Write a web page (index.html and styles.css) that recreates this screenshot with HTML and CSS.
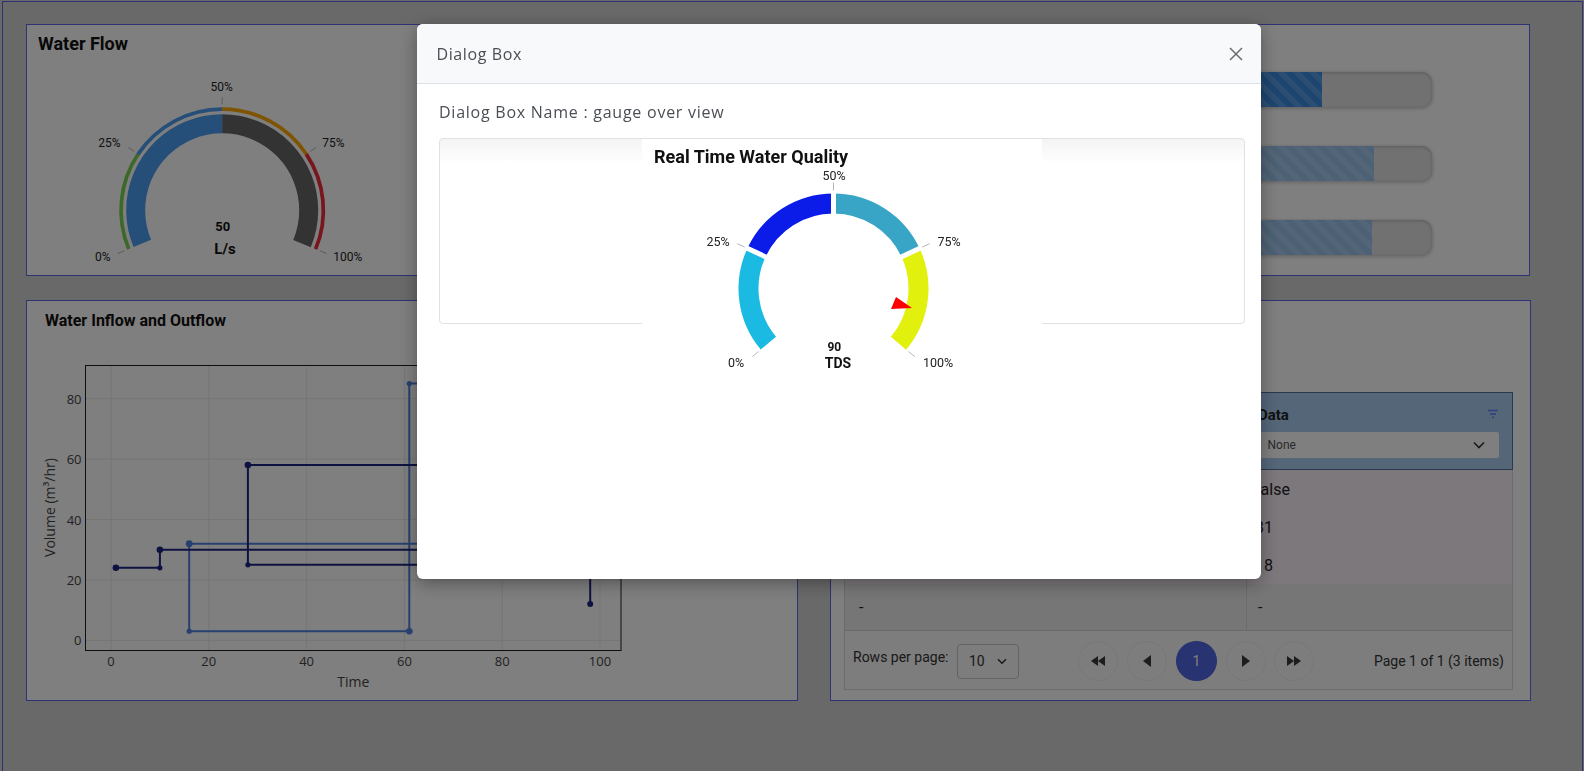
FILE: index.html
```html
<!DOCTYPE html>
<html lang="en">
<head>
<meta charset="utf-8">
<title>Dashboard</title>
<link rel="stylesheet" href="styles.css">
</head>
<body>
<div class="frame">
  <div class="row row-top">
    <section class="card card-flow">
      <h2 class="card-title t-flow">Water Flow</h2>
      <svg class="svg-block" width="872" height="221" viewBox="27 54 872 221">
        <circle cx="222.2" cy="210.3" r="86.5" fill="none" stroke="#4b9ef2" stroke-width="19" stroke-dasharray="169.84 1000" transform="rotate(157.5 222.2 210.3)"/>
        <circle cx="222.2" cy="210.3" r="86.5" fill="none" stroke="#666666" stroke-width="19" stroke-dasharray="169.84 1000" transform="rotate(270 222.2 210.3)"/>
        <circle cx="222.2" cy="210.3" r="101.15" fill="none" stroke="#78d052" stroke-width="3.7" stroke-dasharray="99.3 1000" transform="rotate(157.5 222.2 210.3)"/>
        <circle cx="222.2" cy="210.3" r="101.15" fill="none" stroke="#4b9ef2" stroke-width="3.7" stroke-dasharray="99.3 1000" transform="rotate(213.75 222.2 210.3)"/>
        <circle cx="222.2" cy="210.3" r="101.15" fill="none" stroke="#ffa800" stroke-width="3.7" stroke-dasharray="99.3 1000" transform="rotate(270 222.2 210.3)"/>
        <circle cx="222.2" cy="210.3" r="101.15" fill="none" stroke="#f02a3a" stroke-width="3.7" stroke-dasharray="99.3 1000" transform="rotate(326.25 222.2 210.3)"/>
        <g class="tick">
          <line x1="124.27" y1="250.86" x2="117.8" y2="253.54"/>
          <line x1="134.06" y1="151.41" x2="128.24" y2="147.52"/>
          <line x1="222.2" y1="104.3" x2="222.2" y2="97.3"/>
          <line x1="310.34" y1="151.41" x2="316.16" y2="147.52"/>
          <line x1="320.13" y1="250.86" x2="326.6" y2="253.54"/>
        </g>
        <g class="g-label">
          <text x="102.7" y="256.7">0%</text>
          <text x="109.3" y="142.7">25%</text>
          <text x="221.7" y="87.3">50%</text>
          <text x="333.3" y="142.7">75%</text>
          <text x="347.7" y="256.7">100%</text>
        </g>
        <text class="g-value" x="222.7" y="226.7">50</text>
        <text class="g-unit" x="225" y="249.3">L/s</text>
      </svg>
    </section>
    <section class="card card-bars">
      <div class="bar"><div class="fill fill-a" style="width:382px"></div></div>
      <div class="bar"><div class="fill fill-b" style="width:434px"></div></div>
      <div class="bar"><div class="fill fill-b" style="width:432px"></div></div>
    </section>
  </div>

  <div class="row row-bottom">
    <section class="card card-chart">
      <h2 class="card-title t-chart">Water Inflow and Outflow</h2>
      <svg class="svg-block" width="770" height="370" viewBox="27 331 770 370">
        <g class="grid-line">
          <line x1="111" y1="365.5" x2="111" y2="650.5"/>
          <line x1="208.8" y1="365.5" x2="208.8" y2="650.5"/>
          <line x1="306.6" y1="365.5" x2="306.6" y2="650.5"/>
          <line x1="404.4" y1="365.5" x2="404.4" y2="650.5"/>
          <line x1="502.2" y1="365.5" x2="502.2" y2="650.5"/>
          <line x1="600" y1="365.5" x2="600" y2="650.5"/>
          <line x1="85.5" y1="640.3" x2="621" y2="640.3"/>
          <line x1="85.5" y1="579.9" x2="621" y2="579.9"/>
          <line x1="85.5" y1="519.5" x2="621" y2="519.5"/>
          <line x1="85.5" y1="459.1" x2="621" y2="459.1"/>
          <line x1="85.5" y1="398.7" x2="621" y2="398.7"/>
        </g>
        <rect x="85.5" y="365.5" width="535.5" height="285" fill="none" stroke="#1e1e1e" stroke-width="1"/>
        <g class="ax-x">
          <text x="111" y="661">0</text>
          <text x="208.8" y="661">20</text>
          <text x="306.6" y="661">40</text>
          <text x="404.4" y="661">60</text>
          <text x="502.2" y="661">80</text>
          <text x="600" y="661">100</text>
        </g>
        <g class="ax-y">
          <text x="81.5" y="640.3">0</text>
          <text x="81.5" y="579.9">20</text>
          <text x="81.5" y="519.5">40</text>
          <text x="81.5" y="459.1">60</text>
          <text x="81.5" y="398.7">80</text>
        </g>
        <text class="ax-title" x="353.3" y="681.7">Time</text>
        <text class="ax-title" x="49" y="507.5" transform="rotate(-90 49 507.5)">Volume (m³/hr)</text>
        <g class="s-light">
          <path d="M189.2 543.7 H590"/>
          <path d="M189.2 543.7 V631.2 H409.3 V383.6 H590"/>
        </g>
        <g class="s-navy">
          <path d="M115.9 567.8 H159.9 V549.7 H590"/>
          <path d="M247.9 465.1 V564.8"/>
          <path d="M247.9 465.1 H590"/>
          <path d="M247.9 564.8 H590"/>
          <path d="M590.2 540 V604.1"/>
        </g>
        <g class="d-light">
          <circle cx="189.2" cy="543.7" r="3.4"/>
          <circle cx="409.3" cy="631.2" r="3.3"/>
          <circle cx="189.2" cy="631.2" r="2.6"/>
          <circle cx="409.3" cy="383.6" r="2.6"/>
        </g>
        <g class="d-navy">
          <circle cx="115.9" cy="567.8" r="3.3"/>
          <circle cx="159.9" cy="549.7" r="3.3"/>
          <circle cx="247.9" cy="465.1" r="3.3"/>
          <circle cx="590.2" cy="604.1" r="3"/>
          <circle cx="159.9" cy="567.8" r="2.6"/>
          <circle cx="247.9" cy="564.8" r="2.6"/>
        </g>
      </svg>
    </section>

    <section class="card card-table">
      <div class="grid">
        <div class="grid-head">
          <div class="hcell"></div>
          <div class="hcell hcell-data">
            <div class="hname">Data</div>
            <svg class="filter-ico" width="12" height="10" viewBox="0 0 12 10">
              <path d="M1 1.5 H11 M3 5 H9 M5 8.5 H7" stroke="#5b7ef2" stroke-width="1.4" fill="none"/>
            </svg>
            <div class="dd">
              <span>None</span>
              <svg width="12" height="8" viewBox="0 0 12 8"><path d="M1 1.5 L6 6.5 L11 1.5" stroke="#333" stroke-width="1.6" fill="none"/></svg>
            </div>
          </div>
        </div>
        <div class="grid-row pink"><div class="cell">true</div><div class="cell c2">false</div></div>
        <div class="grid-row pink"><div class="cell">24</div><div class="cell c2">31</div></div>
        <div class="grid-row pink"><div class="cell">12</div><div class="cell c2">18</div></div>
        <div class="grid-row gray"><div class="cell">-</div><div class="cell c2">-</div></div>
        <div class="pager">
          <span class="rpp">Rows per page:</span>
          <div class="sel"><span>10</span>
            <svg width="10" height="7" viewBox="0 0 10 7"><path d="M1 1.2 L5 5.2 L9 1.2" stroke="#333" stroke-width="1.5" fill="none"/></svg>
          </div>
          <div class="pbtns">
            <span class="pbtn"><svg width="14" height="10" viewBox="0 0 14 10"><path d="M7 0 L0 5 L7 10 Z M14 0 L7 5 L14 10 Z" fill="#3a3a3a"/></svg></span>
            <span class="pbtn"><svg width="8" height="12" viewBox="0 0 8 12"><path d="M8 0 L0 6 L8 12 Z" fill="#3a3a3a"/></svg></span>
            <span class="pbtn active">1</span>
            <span class="pbtn"><svg width="8" height="12" viewBox="0 0 8 12"><path d="M0 0 L8 6 L0 12 Z" fill="#3a3a3a"/></svg></span>
            <span class="pbtn"><svg width="14" height="10" viewBox="0 0 14 10"><path d="M0 0 L7 5 L0 10 Z M7 0 L14 5 L7 10 Z" fill="#3a3a3a"/></svg></span>
          </div>
          <span class="pinfo">Page 1 of 1 (3 items)</span>
        </div>
      </div>
    </section>
  </div>
</div>

<div class="backdrop"></div>

<div class="dialog">
  <div class="dlg-head">
    <span class="dlg-title">Dialog Box</span>
    <svg class="dlg-close" width="14" height="14" viewBox="0 0 14 14"><path d="M1 1 L13 13 M13 1 L1 13" stroke="#6c6c6c" stroke-width="1.5"/></svg>
  </div>
  <div class="dlg-body">
    <p class="dlg-name">Dialog Box Name : gauge over view</p>
    <div class="dlg-box">
      <div class="gauge-wrap">
        <svg class="svg-block" width="400" height="240" viewBox="642 139 400 240">
          <text class="q-title" x="654" y="163">Real Time Water Quality</text>
          <circle cx="833.5" cy="288.5" r="85" fill="none" stroke="#1bbae2" stroke-width="20" stroke-dasharray="96.43 1000" transform="rotate(140 833.5 288.5)"/>
          <circle cx="833.5" cy="288.5" r="85" fill="none" stroke="#0c1ce8" stroke-width="20" stroke-dasharray="96.43 1000" transform="rotate(205 833.5 288.5)"/>
          <circle cx="833.5" cy="288.5" r="85" fill="none" stroke="#38a4c6" stroke-width="20" stroke-dasharray="96.43 1000" transform="rotate(270 833.5 288.5)"/>
          <circle cx="833.5" cy="288.5" r="85" fill="none" stroke="#e2f00e" stroke-width="20" stroke-dasharray="96.43 1000" transform="rotate(335 833.5 288.5)"/>
          <g stroke="#ffffff" stroke-width="5">
            <line x1="767.34" y1="257.65" x2="745.59" y2="247.51"/>
            <line x1="833.5" y1="215.5" x2="833.5" y2="191.5"/>
            <line x1="899.66" y1="257.65" x2="921.41" y2="247.51"/>
          </g>
          <g class="tick">
            <line x1="758.43" y1="351.49" x2="752.3" y2="356.64"/>
            <line x1="744.68" y1="247.08" x2="737.43" y2="243.7"/>
            <line x1="833.5" y1="190.5" x2="833.5" y2="182.5"/>
            <line x1="922.32" y1="247.08" x2="929.57" y2="243.7"/>
            <line x1="908.57" y1="351.49" x2="914.7" y2="356.64"/>
          </g>
          <g class="q-label">
            <text x="736" y="362">0%</text>
            <text x="718" y="241">25%</text>
            <text x="834" y="175">50%</text>
            <text x="949" y="241">75%</text>
            <text x="938" y="362">100%</text>
          </g>
          <polygon points="891,309 896,297 912,308" fill="#ff0000"/>
          <text class="q-value" x="834.3" y="346.7">90</text>
          <text class="q-unit" x="838" y="362.7">TDS</text>
        </svg>
      </div>
    </div>
  </div>
</div>
</body>
</html>
```

FILE: styles.css
```css
* { box-sizing: border-box; }

html, body {
  margin: 0;
  padding: 0;
}

body {
  width: 1584px;
  height: 771px;
  overflow: hidden;
  background: #d3d3d3;
  font-family: Roboto, "Liberation Sans", sans-serif;
  color: #222;
}

.frame {
  margin: 1px 0 0 2px;
  width: 1581px;
  height: 770px;
  border: 1px solid #5a66e8;
  border-bottom: none;
  padding: 22px 0 0 23px;
  background: #d3d3d3;
}

.row { display: flex; }
.row-top { gap: 12px; height: 252px; }
.row-bottom { gap: 32px; margin-top: 24px; height: 401px; }

.card {
  background: #ffffff;
  border: 1px solid #5a66e8;
}

.card-flow { width: 874px; }
.card-bars {
  width: 618px;
  padding: 47px 0 0 27px;
  display: flex;
  flex-direction: column;
}
.card-chart { width: 772px; }
.card-table { width: 701px; padding: 91px 0 0 13px; }

.card-title {
  margin: 0;
  font-weight: 700;
  color: #111;
}
.t-flow {
  height: 29px;
  padding: 8px 0 0 11px;
  font-size: 18px;
  line-height: 21px;
}
.t-chart {
  height: 30px;
  padding: 10px 0 0 18px;
  font-size: 16px;
  line-height: 19px;
}

.svg-block { display: block; }

/* gauges */
.tick line { stroke: #b5b5b5; stroke-width: 1; }
.g-label text, .q-label text {
  font-family: Roboto, "Liberation Sans", sans-serif;
  text-anchor: middle;
  dominant-baseline: central;
  fill: #222;
}
.g-label text { font-size: 12px; }
.q-label text { font-size: 12.5px; }
.g-value, .g-unit, .q-value, .q-unit {
  font-family: Roboto, "Liberation Sans", sans-serif;
  font-weight: 700;
  text-anchor: middle;
  dominant-baseline: central;
  fill: #111;
}
.g-value { font-size: 13px; }
.g-unit { font-size: 15px; }
.q-value { font-size: 12px; }
.q-unit { font-size: 14px; }
.q-title {
  font-family: Roboto, "Liberation Sans", sans-serif;
  font-weight: 700;
  font-size: 18px;
  fill: #111;
}

/* progress bars */
.bar {
  width: 492px;
  height: 35px;
  border-radius: 10px;
  background: #e2e2e2;
  box-shadow: inset 0 1px 3px rgba(0,0,0,0.18), 0 1px 4px rgba(0,0,0,0.28);
  overflow: hidden;
}
.bar + .bar { margin-top: 39px; }
.fill {
  height: 100%;
  background-image: linear-gradient(45deg, rgba(255,255,255,0.15) 25%, transparent 25%, transparent 50%, rgba(255,255,255,0.15) 50%, rgba(255,255,255,0.15) 75%, transparent 75%, transparent);
  background-size: 16px 16px;
}
.fill-a { background-color: #3a8be0; }
.fill-b { background-color: #98c2ea; }

/* chart */
.grid-line line { stroke: #ebebeb; stroke-width: 1; }
.ax-x text, .ax-y text, .ax-title {
  font-family: "Open Sans", "Liberation Sans", sans-serif;
  fill: #444;
  dominant-baseline: central;
}
.ax-x text { font-size: 13px; text-anchor: middle; }
.ax-y text { font-size: 13px; text-anchor: end; }
.ax-title { font-size: 14px; text-anchor: middle; }
.s-light path { stroke: #4f80e0; stroke-width: 2; fill: none; }
.s-navy path { stroke: #1c2580; stroke-width: 2; fill: none; }
.d-light circle { fill: #4f80e0; }
.d-navy circle { fill: #1c2580; }

/* table */
.grid {
  width: 669px;
  border: 1px solid #d6d6d6;
  border-top: none;
}
.grid-head {
  display: grid;
  grid-template-columns: 401px 1fr;
  height: 78px;
  margin: 0 -1px;
  border: 1px solid #56729c;
  background: #abcdf2;
}
.hcell-data {
  position: relative;
  padding: 13px 13px 0 12px;
}
.hname {
  font-size: 15px;
  line-height: 18px;
  font-weight: 700;
  color: #222;
}
.filter-ico {
  position: absolute;
  right: 13px;
  top: 16px;
}
.dd {
  margin: 8px 0 0 -1px;
  height: 26px;
  background: #ffffff;
  border-radius: 2px;
  display: flex;
  align-items: center;
  justify-content: space-between;
  padding: 0 14px 0 10.5px;
  font-size: 12px;
  color: #555;
}
.grid-row {
  display: grid;
  grid-template-columns: 401px 1fr;
  height: 38px;
  font-size: 16px;
  color: #222;
}
.grid-row.pink { background: #fbf0f9; }
.grid-row.gray {
  height: 47px;
  background: #ededed;
  border-bottom: 1px solid #d2d2d2;
}
.cell {
  display: flex;
  align-items: center;
  padding-left: 14px;
}
.cell.c2 {
  border-left: 1px solid #d8d8d8;
  padding-left: 8px;
}
.grid-row.gray .cell.c2 { padding-left: 11px; }
.pager {
  height: 58px;
  background: #fafafa;
  display: flex;
  align-items: center;
  padding: 0 8px 0 8px;
  font-size: 14px;
  color: #333;
}
.rpp { margin-bottom: 6px; }
.sel {
  margin-left: 8.5px;
  width: 62px;
  height: 35px;
  border: 1px solid #c6c6c6;
  border-radius: 4px;
  display: flex;
  align-items: center;
  gap: 12px;
  padding-left: 11px;
  margin-top: 2px;
}
.pbtns {
  display: flex;
  gap: 8.75px;
  margin-left: 59.5px;
  margin-top: 2px;
}
.pbtn {
  width: 40px;
  height: 40px;
  border-radius: 50%;
  border: 1px solid #f0f0f0;
  display: flex;
  align-items: center;
  justify-content: center;
}
.pbtn.active {
  width: 41px;
  background: #5066e2;
  border-color: #5066e2;
  color: #ffffff;
  font-size: 14px;
}
.pinfo {
  margin-left: auto;
  margin-top: 2px;
  font-size: 14px;
}

/* modal */
.backdrop {
  position: fixed;
  inset: 0;
  background: rgba(0,0,0,0.5);
}
.dialog {
  position: fixed;
  left: 417px;
  top: 24px;
  width: 844px;
  height: 555px;
  background: #ffffff;
  border-radius: 6px;
  box-shadow: 0 4px 18px rgba(0,0,0,0.35);
  overflow: hidden;
}
.dlg-head {
  height: 60px;
  background: #f8f9fa;
  border-bottom: 1px solid #dee2e6;
  display: flex;
  align-items: center;
  justify-content: space-between;
  padding: 0 18px 0 19.5px;
}
.dlg-title {
  font-family: "Open Sans", "Liberation Sans", sans-serif;
  font-size: 16px;
  letter-spacing: 0.6px;
  color: #4a4f55;
}
.dlg-close { display: block; }
.dlg-body {
  padding: 16px 16px 0 22px;
}
.dlg-name {
  margin: 0;
  font-family: "Open Sans", "Liberation Sans", sans-serif;
  font-size: 16px;
  line-height: 24px;
  letter-spacing: 0.75px;
  color: #4a4f55;
}
.dlg-box {
  margin-top: 14px;
  height: 186px;
  border: 1px solid #dee2e6;
  border-radius: 4px;
  background: linear-gradient(#f4f4f4, #ffffff 24px);
}
.gauge-wrap {
  width: 400px;
  height: 240px;
  margin-left: 202px;
  background: #ffffff;
}
```
